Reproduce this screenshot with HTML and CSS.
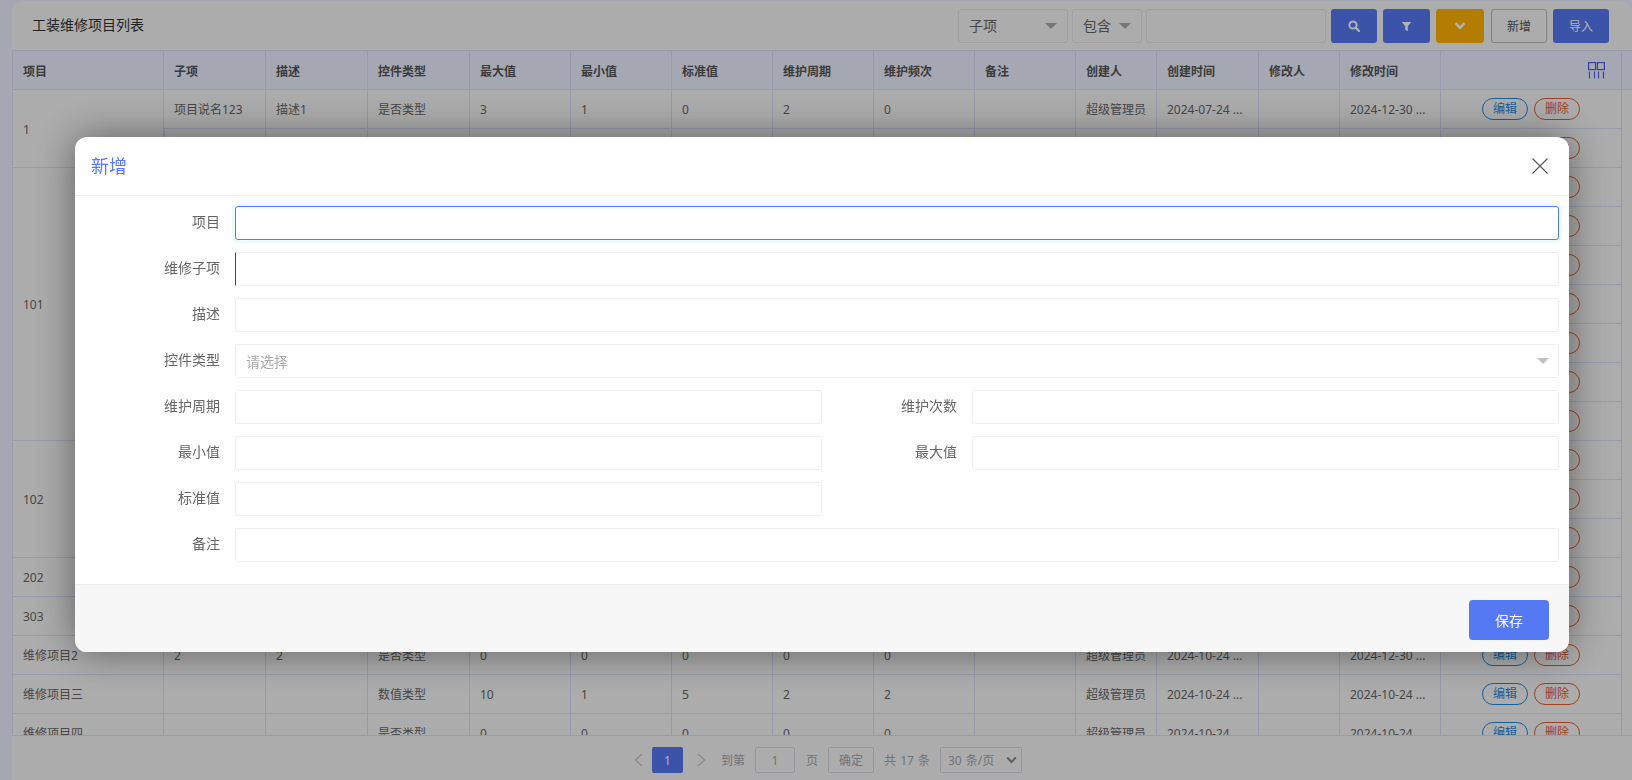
FILE: index.html
```html
<!DOCTYPE html>
<html lang="zh-CN">
<head>
<meta charset="utf-8">
<title>工装维修项目列表</title>
<link rel="stylesheet" href="styles.css">
</head>
<body>
<main class="card">
  <header class="toolbar">
    <h1 class="page-title">工装维修项目列表</h1>
    <div class="tools">
      <div class="fake-select w110"><span>子项</span><i class="caret"></i></div>
      <div class="fake-select w70"><span>包含</span><i class="caret"></i></div>
      <div class="search-input"></div>
      <button class="btn primary w46"><svg width="14" height="14" viewBox="0 0 14 14"><circle cx="6" cy="6" r="3.6" fill="none" stroke="#fff" stroke-width="2"/><path d="M8.8 8.8 12 12" stroke="#fff" stroke-width="2.2" stroke-linecap="round"/></svg></button>
      <button class="btn primary w47"><svg width="11" height="11" viewBox="0 0 12 12"><path d="M.8 1h10.4L7.4 5.8V11.2L4.6 9.6V5.8Z" fill="#fff"/></svg></button>
      <button class="btn warn w48"><svg width="14" height="10" viewBox="0 0 14 10"><path d="M2.5 2.2 7 6.8l4.5-4.6" fill="none" stroke="#fff" stroke-width="2.6"/></svg></button>
      <button class="btn plain w56">新增</button>
      <button class="btn primary w56">导入</button>
    </div>
  </header>

  <div class="table-wrap">
    <table class="grid">
      <colgroup>
        <col class="c152"><col class="c102"><col class="c102"><col class="c102"><col class="c101"><col class="c101"><col class="c101"><col class="c101"><col class="c101"><col class="c101"><col class="c81"><col class="c102"><col class="c81"><col class="c101"><col class="c181"><col class="c10">
      </colgroup>
      <thead>
        <tr><th>项目</th><th>子项</th><th>描述</th><th>控件类型</th><th>最大值</th><th>最小值</th><th>标准值</th><th>维护周期</th><th>维护频次</th><th>备注</th><th>创建人</th><th>创建时间</th><th>修改人</th><th>修改时间</th>
          <th class="col-tool"><svg width="17" height="17" viewBox="0 0 17 17" fill="none" stroke="#4f5fe8" stroke-width="1.2"><rect x=".6" y=".6" width="7" height="7"/><rect x="9.4" y=".6" width="7" height="7"/><path d="M1.5 9.5v7M6.5 9.5v7M10.5 9.5v7M15.5 9.5v7"/></svg></th><th class="filler"></th></tr>
      </thead>
      <tbody>
        <tr><td rowspan="2">1</td><td>项目说名123</td><td>描述1</td><td>是否类型</td><td>3</td><td>1</td><td>0</td><td>2</td><td>0</td><td></td><td>超级管理员</td><td>2024-07-24 ...</td><td></td><td>2024-12-30 ...</td><td class="acts"><a class="pill edit">编辑</a><a class="pill del">删除</a></td></tr>
        <tr><td>项目2</td><td>描述2</td><td>是否类型</td><td>3</td><td>1</td><td>0</td><td>2</td><td>0</td><td></td><td>超级管理员</td><td>2024-07-24 ...</td><td></td><td>2024-12-30 ...</td><td class="acts"><a class="pill edit">编辑</a><a class="pill del">删除</a></td></tr>
        <tr><td rowspan="7">101</td><td>1</td><td>1</td><td>是否类型</td><td>0</td><td>0</td><td>0</td><td>0</td><td>0</td><td></td><td>超级管理员</td><td>2024-10-24 ...</td><td></td><td>2024-12-30 ...</td><td class="acts"><a class="pill edit">编辑</a><a class="pill del">删除</a></td></tr>
        <tr><td>2</td><td>2</td><td>是否类型</td><td>0</td><td>0</td><td>0</td><td>0</td><td>0</td><td></td><td>超级管理员</td><td>2024-10-24 ...</td><td></td><td>2024-12-30 ...</td><td class="acts"><a class="pill edit">编辑</a><a class="pill del">删除</a></td></tr>
        <tr><td>3</td><td>3</td><td>是否类型</td><td>0</td><td>0</td><td>0</td><td>0</td><td>0</td><td></td><td>超级管理员</td><td>2024-10-24 ...</td><td></td><td>2024-12-30 ...</td><td class="acts"><a class="pill edit">编辑</a><a class="pill del">删除</a></td></tr>
        <tr><td>4</td><td>4</td><td>是否类型</td><td>0</td><td>0</td><td>0</td><td>0</td><td>0</td><td></td><td>超级管理员</td><td>2024-10-24 ...</td><td></td><td>2024-12-30 ...</td><td class="acts"><a class="pill edit">编辑</a><a class="pill del">删除</a></td></tr>
        <tr><td>5</td><td>5</td><td>是否类型</td><td>0</td><td>0</td><td>0</td><td>0</td><td>0</td><td></td><td>超级管理员</td><td>2024-10-24 ...</td><td></td><td>2024-12-30 ...</td><td class="acts"><a class="pill edit">编辑</a><a class="pill del">删除</a></td></tr>
        <tr><td>6</td><td>6</td><td>是否类型</td><td>0</td><td>0</td><td>0</td><td>0</td><td>0</td><td></td><td>超级管理员</td><td>2024-10-24 ...</td><td></td><td>2024-12-30 ...</td><td class="acts"><a class="pill edit">编辑</a><a class="pill del">删除</a></td></tr>
        <tr><td>7</td><td>7</td><td>是否类型</td><td>0</td><td>0</td><td>0</td><td>0</td><td>0</td><td></td><td>超级管理员</td><td>2024-10-24 ...</td><td></td><td>2024-12-30 ...</td><td class="acts"><a class="pill edit">编辑</a><a class="pill del">删除</a></td></tr>
        <tr><td rowspan="3">102</td><td>1</td><td>1</td><td>是否类型</td><td>0</td><td>0</td><td>0</td><td>0</td><td>0</td><td></td><td>超级管理员</td><td>2024-10-24 ...</td><td></td><td>2024-12-30 ...</td><td class="acts"><a class="pill edit">编辑</a><a class="pill del">删除</a></td></tr>
        <tr><td>2</td><td>2</td><td>是否类型</td><td>0</td><td>0</td><td>0</td><td>0</td><td>0</td><td></td><td>超级管理员</td><td>2024-10-24 ...</td><td></td><td>2024-12-30 ...</td><td class="acts"><a class="pill edit">编辑</a><a class="pill del">删除</a></td></tr>
        <tr><td>3</td><td>3</td><td>是否类型</td><td>0</td><td>0</td><td>0</td><td>0</td><td>0</td><td></td><td>超级管理员</td><td>2024-10-24 ...</td><td></td><td>2024-12-30 ...</td><td class="acts"><a class="pill edit">编辑</a><a class="pill del">删除</a></td></tr>
        <tr><td>202</td><td></td><td></td><td>是否类型</td><td>0</td><td>0</td><td>0</td><td>0</td><td>0</td><td></td><td>超级管理员</td><td>2024-10-24 ...</td><td></td><td>2024-12-30 ...</td><td class="acts"><a class="pill edit">编辑</a><a class="pill del">删除</a></td></tr>
        <tr><td>303</td><td></td><td></td><td>是否类型</td><td>0</td><td>0</td><td>0</td><td>0</td><td>0</td><td></td><td>超级管理员</td><td>2024-10-24 ...</td><td></td><td>2024-12-30 ...</td><td class="acts"><a class="pill edit">编辑</a><a class="pill del">删除</a></td></tr>
        <tr><td>维修项目2</td><td>2</td><td>2</td><td>是否类型</td><td>0</td><td>0</td><td>0</td><td>0</td><td>0</td><td></td><td>超级管理员</td><td>2024-10-24 ...</td><td></td><td>2024-12-30 ...</td><td class="acts"><a class="pill edit">编辑</a><a class="pill del">删除</a></td></tr>
        <tr><td>维修项目三</td><td></td><td></td><td>数值类型</td><td>10</td><td>1</td><td>5</td><td>2</td><td>2</td><td></td><td>超级管理员</td><td>2024-10-24 ...</td><td></td><td>2024-10-24 ...</td><td class="acts"><a class="pill edit">编辑</a><a class="pill del">删除</a></td></tr>
        <tr><td>维修项目四</td><td></td><td></td><td>是否类型</td><td>0</td><td>0</td><td>0</td><td>0</td><td>0</td><td></td><td>超级管理员</td><td>2024-10-24 ...</td><td></td><td>2024-10-24 ...</td><td class="acts"><a class="pill edit">编辑</a><a class="pill del">删除</a></td></tr>
      </tbody>
    </table>
  </div>

  <footer class="pager">
    <svg class="chev" width="11" height="14" viewBox="0 0 11 14"><path d="M9 1 2.5 7 9 13" fill="none" stroke="#c4c4cc" stroke-width="1.2"/></svg>
    <span class="page-on">1</span>
    <svg class="chev next" width="11" height="14" viewBox="0 0 11 14"><path d="M2 1l6.5 6L2 13" fill="none" stroke="#c4c4cc" stroke-width="1.2"/></svg>
    <span class="pg-label">到第</span>
    <span class="pg-box">1</span>
    <span class="pg-label">页</span>
    <span class="pg-box pg-go">确定</span>
    <span class="pg-label">共 17 条</span>
    <span class="pg-box pg-size">30 条/页<svg width="11" height="8" viewBox="0 0 11 8"><path d="M1.2 1.5 5.5 6l4.3-4.5" fill="none" stroke="#888" stroke-width="1.9"/></svg></span>
  </footer>
</main>

<div class="mask"></div>

<section class="modal">
  <div class="modal-head">
    <h2 class="modal-title">新增</h2>
    <svg class="modal-x" width="16" height="16" viewBox="0 0 16 16"><path d="M.5.5l15 15M15.5.5l-15 15" stroke="#555" stroke-width="1.1" fill="none"/></svg>
  </div>
  <form class="modal-body">
    <label class="lbl">项目</label><div class="field span3 focus"></div>
    <label class="lbl">维修子项</label><div class="field span3 required"></div>
    <label class="lbl">描述</label><div class="field span3"></div>
    <label class="lbl">控件类型</label><div class="field span3 select"><span>请选择</span><i class="caret light"></i></div>
    <label class="lbl">维护周期</label><div class="field"></div><label class="lbl">维护次数</label><div class="field"></div>
    <label class="lbl">最小值</label><div class="field"></div><label class="lbl">最大值</label><div class="field"></div>
    <label class="lbl">标准值</label><div class="field"></div><div class="blank"></div>
    <label class="lbl">备注</label><div class="field span3"></div>
  </form>
  <div class="modal-foot"><button class="save" type="button">保存</button></div>
</section>
</body>
</html>
```

FILE: styles.css
```css
* { box-sizing: border-box; }
html, body { margin: 0; height: 100%; overflow: hidden; }
body {
  background: #ecefff;
  font-family: "Noto Sans", "Noto Sans CJK SC", sans-serif;
  color: #666;
  padding: 1px 0 0 12px;
}
.card {
  background: #f7f7f7;
  height: 779px;
  border-radius: 12px 12px 0 0;
  display: flex;
  flex-direction: column;
  overflow: hidden;
}
.toolbar {
  height: 49px;
  flex: none;
  display: flex;
  align-items: flex-start;
  justify-content: space-between;
  padding: 8px 23px 0 20px;
}
.page-title { margin: 6px 0 0; font-size: 14px; font-weight: 400; color: #333; line-height: 20px; }
.tools { display: flex; }
.fake-select, .search-input {
  height: 34px;
  border: 1px solid #e6e6e6;
  border-radius: 3px;
  margin-right: 4px;
  display: flex;
  align-items: center;
  justify-content: space-between;
  padding: 0 10px;
  font-size: 14px;
  line-height: 20px;
}
.w110 { width: 110px; }
.w70 { width: 70px; }
.search-input { width: 180px; }
.caret {
  width: 0; height: 0;
  border-left: 6px solid transparent;
  border-right: 6px solid transparent;
  border-top: 6px solid #aaa;
}
.caret.light { border-top-color: #c2c2c2; }
.btn {
  height: 34px;
  border: 0;
  border-radius: 3px;
  margin-left: 6px;
  padding: 0;
  display: flex;
  align-items: center;
  justify-content: center;
  font-family: inherit;
  font-size: 12px;
  color: #fff;
}
.tools .btn:first-of-type { margin-left: 1px; }
.primary { background: #5578f3; }
.warn { background: #ffb300; }
.plain { background: #f7f7f7; border: 1px solid #bbb; color: #555; margin-left: 7px; }
.w46 { width: 46px; }
.w47 { width: 47px; }
.w48 { width: 48px; }
.w56 { width: 56px; }

.table-wrap { height: 686px; flex: none; overflow: hidden; border-bottom: 1px solid #d8def5; }
.grid { border-collapse: separate; border-spacing: 0; table-layout: fixed; width: 1620px; font-size: 12px; }
.c152 { width: 152px; }
.c102 { width: 102px; }
.c101 { width: 101px; }
.c81 { width: 81px; }
.c181 { width: 181px; }
.c10 { width: 10px; }
.grid th, .grid td {
  border-right: 1px solid #d8def5;
  border-bottom: 1px solid #d8def5;
  padding: 2px 0 0 10px;
  text-align: left;
  white-space: nowrap;
  overflow: hidden;
  color: #666;
  height: 39px;
  line-height: 20px;
}
.grid th {
  height: 40px;
  background: #ecf0ff;
  border-top: 1px solid #d8def5;
  font-weight: 600;
  color: #555;
  padding-top: 3px;
}
.grid tr > :first-child { border-left: 1px solid #d8def5; }
.grid td[rowspan] { border-left: 1px solid #d8def5; }
.grid th.filler { border-right: 0; padding: 0; }
.grid th.col-tool { text-align: right; padding: 6px 16px 0 0; }
.grid td.acts { padding: 8px 0 0; vertical-align: top; text-align: center; font-size: 0; }
.pill {
  display: inline-block;
  vertical-align: top;
  width: 46px;
  height: 22px;
  line-height: 20px;
  border-radius: 11px;
  border: 1px solid;
  font-size: 12px;
  text-align: center;
}
.edit { color: #1e8ae0; border-color: #1e8ae0; }
.del { color: #e85a2a; border-color: #e85a2a; margin-left: 6px; }

.pager {
  flex: 1;
  display: flex;
  align-items: center;
  padding-left: 621px;
  font-size: 12px;
  color: #a4a4ae;
  padding-top: 4px;
  word-spacing: 1px;
}
.chev { margin-right: 8px; }
.chev.next { margin: 0 14px 0 13px; }
.page-on {
  width: 31px; height: 26px;
  background: #5578f3;
  border-radius: 2px;
  color: #fff;
  display: flex; align-items: center; justify-content: center;
}
.pg-label { margin-right: 10px; }
.pg-box {
  width: 40px; height: 26px;
  border: 1px solid #d8d8e6;
  border-radius: 2px;
  display: flex; align-items: center; justify-content: center;
  margin-right: 11px;
}
.pg-go { width: 46px; margin-right: 10px; }
.pg-size { width: 82px; justify-content: space-between; padding: 0 4px 0 7px; }

.mask { position: fixed; inset: 0; background: rgba(0, 0, 0, .3); }

.modal {
  position: fixed;
  left: 75px;
  top: 137px;
  width: 1494px;
  height: 515px;
  background: #fff;
  border-radius: 12px;
  box-shadow: 0 0 40px rgba(0, 0, 0, .45);
  overflow: hidden;
  display: flex;
  flex-direction: column;
}
.modal-head {
  height: 59px;
  flex: none;
  border-bottom: 1px solid #eee;
  display: flex;
  align-items: center;
  justify-content: space-between;
  padding: 0 21px 0 16px;
}
.modal-title { margin: 0 0 2px; font-size: 18px; font-weight: 400; color: #5578f3; }
.modal-body {
  flex: none;
  height: 388px;
  padding: 10px 10px 0 0;
  display: grid;
  grid-template-columns: 145px 602px 135px 602px;
  grid-auto-rows: 34px;
  column-gap: 0;
  row-gap: 12px;
}
.lbl { font-size: 14px; color: #666; text-align: right; line-height: 32px; padding-right: 0; }
.field { border: 1px solid #eee; border-radius: 3px; margin-left: 15px; }
.span3 { grid-column: span 3; }
.blank { grid-column: span 2; }
.focus { border-color: #5578f3; box-shadow: 0 0 0 3px #eefafa; }
.required { border-left: 1px solid #e00; border-radius: 0 3px 3px 0; }
.select {
  display: flex;
  align-items: center;
  justify-content: space-between;
  padding: 0 9px 1px 10px;
  font-size: 14px;
  color: #aaa;
}
.modal-foot {
  flex: 1;
  background: #f7f7f7;
  border-top: 1px solid #eee;
  display: flex;
  justify-content: flex-end;
  padding: 15px 20px 0 0;
}
.save {
  width: 80px;
  height: 40px;
  border: 0;
  border-radius: 4px;
  background: #5578f3;
  color: #fff;
  font-family: inherit;
  font-size: 14px;
}
```
